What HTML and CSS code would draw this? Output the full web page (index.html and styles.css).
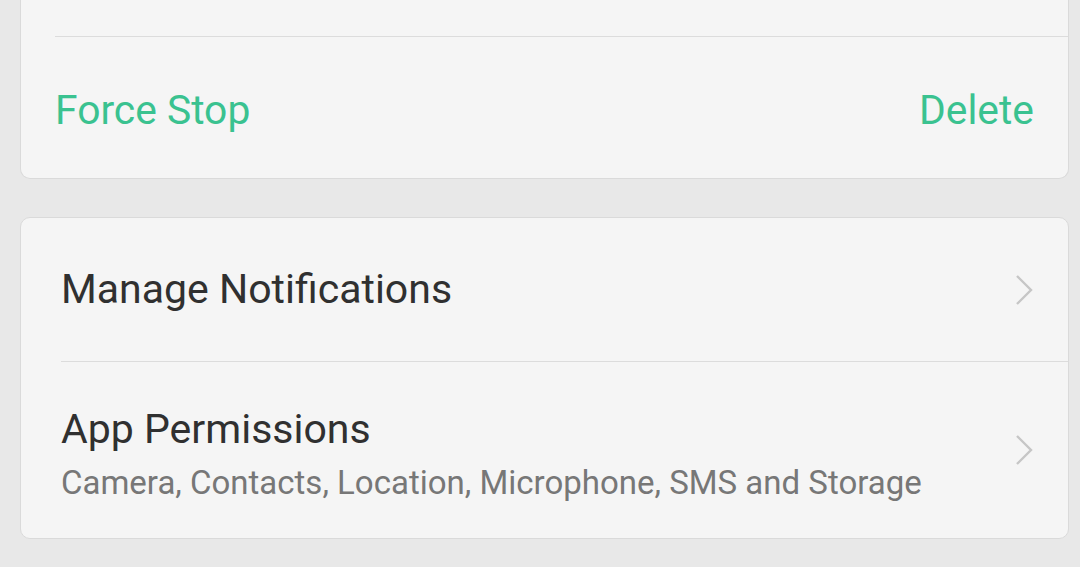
FILE: index.html
```html
<!DOCTYPE html>
<html>
<head>
<meta charset="utf-8">
<link rel="stylesheet" href="styles.css">
</head>
<body>
<div class="page">
  <div class="card card-top">
    <div class="top-area"></div>
    <div class="actions">
      <span class="action">Force Stop</span>
      <span class="action">Delete</span>
    </div>
  </div>
  <div class="card card-list">
    <div class="row row-single">
      <div class="row-text">
        <div class="title">Manage Notifications</div>
      </div>
      <svg class="chev" width="20" height="32" viewBox="0 0 20 32"><path d="M3 2 L17 16 L3 30" fill="none" stroke="#c6c6c6" stroke-width="2.4"/></svg>
    </div>
    <div class="row row-double">
      <div class="row-text">
        <div class="title">App Permissions</div>
        <div class="subtitle">Camera, Contacts, Location, Microphone, SMS and Storage</div>
      </div>
      <svg class="chev" width="20" height="32" viewBox="0 0 20 32"><path d="M3 2 L17 16 L3 30" fill="none" stroke="#c6c6c6" stroke-width="2.4"/></svg>
    </div>
  </div>
</div>
</body>
</html>
```

FILE: styles.css
```css
html, body {
  margin: 0;
  padding: 0;
  background: #e8e8e8;
  font-family: Roboto, "Noto Sans", sans-serif;
  overflow: hidden;
}
.page {
  display: flex;
  flex-direction: column;
  gap: 38px;
  padding: 0 11px 0 20px;
}
.card {
  background: #f5f5f5;
  border: 1px solid #dadada;
  border-radius: 10px;
}
.card-top {
  margin-top: -20px;
  border-top: none;
}
.top-area {
  height: 56px;
  margin-left: 34px;
  border-bottom: 1.5px solid #dcdcdc;
}
.actions {
  height: 141px;
  box-sizing: border-box;
  padding: 5px 34px 0 34px;
  display: flex;
  justify-content: space-between;
  align-items: center;
}
.action {
  color: #3ac290;
  font-size: 40.8px;
  line-height: 1;
}
.card-list {
  display: flex;
  flex-direction: column;
}
.row {
  display: flex;
  align-items: center;
  justify-content: space-between;
  margin-left: 40px;
  padding-right: 34px;
}
.row-single {
  height: 143px;
  border-bottom: 1.5px solid #dcdcdc;
}
.row-double {
  height: 176px;
}
.title {
  color: #303030;
  font-size: 41px;
  line-height: 1;
}
.subtitle {
  color: #777;
  font-size: 33px;
  line-height: 1;
  margin-top: 16px;
}
.row-double .row-text {
  padding-top: 7px;
}
.chev {
  display: block;
  flex: none;
}
```
